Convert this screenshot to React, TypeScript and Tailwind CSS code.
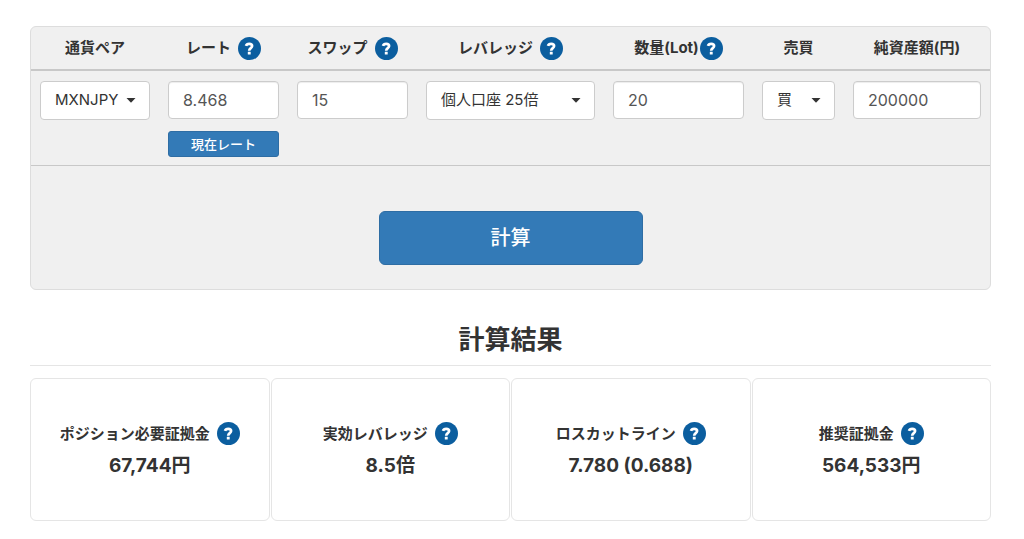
import React, { useState } from "react";

const fontStack = "font-['Inter','Noto_Sans_CJK_JP',sans-serif]";

const Help = ({ topic }: { topic: string }) => (
  <button type="button" aria-label={`${topic}の説明`} className="shrink-0">
    <svg viewBox="0 0 23 23" className="block h-[23px] w-[23px]" aria-hidden="true">
      <circle cx="11.5" cy="11.5" r="11.5" fill="#0b5e9f" />
      <path
        d="M8 8.9C8.4 7.5 9.6 6.9 11.2 6.9c1.8 0 2.9.8 2.9 2.2 0 2-2.9 2.1-2.9 4.6"
        fill="none"
        stroke="#fff"
        strokeWidth="2.7"
      />
      <rect x="9.8" y="14.8" width="2.9" height="2.8" rx=".3" fill="#fff" />
    </svg>
  </button>
);

type SelectProps = {
  id: string;
  options: string[];
};

const Select = ({ id, options }: SelectProps) => (
  <div className="relative">
    <select
      id={id}
      className="block h-[39px] w-full appearance-none rounded border border-[#ccc] bg-white pl-[14px] pr-6 text-[15px] text-[#333]"
    >
      {options.map((option) => (
        <option key={option}>{option}</option>
      ))}
    </select>
    <svg
      viewBox="0 0 10 5"
      className="pointer-events-none absolute right-[14px] top-[17px] h-[5px] w-[10px]"
      aria-hidden="true"
    >
      <path d="M0.5 0h9L5 4.7z" fill="#333" />
    </svg>
  </div>
);

const inputClass =
  "block h-[38px] w-full rounded border border-[#ccc] bg-white px-[14px] text-base text-[#555] shadow-[inset_0_1px_1px_rgba(0,0,0,0.075)]";

const columns = [
  { id: "pair", label: "通貨ペア", help: false, space: "", width: "w-[128px]" },
  { id: "rate", label: "レート", help: true, space: "gap-[7px]", width: "w-[129px]" },
  { id: "swap", label: "スワップ", help: true, space: "gap-[7px]", width: "w-[129px]" },
  { id: "leverage", label: "レバレッジ", help: true, space: "gap-[7px]", width: "w-[187px]" },
  { id: "lot", label: "数量(Lot)", help: true, space: "gap-px", width: "w-[149px]" },
  { id: "side", label: "売買", help: false, space: "", width: "w-[91px]" },
  { id: "equity", label: "純資産額(円)", help: false, space: "", width: "w-[146px]" },
];

const results = [
  { label: "ポジション必要証拠金", value: "67,744円" },
  { label: "実効レバレッジ", value: "8.5倍" },
  { label: "ロスカットライン", value: "7.780 (0.688)" },
  { label: "推奨証拠金", value: "564,533円" },
];

const App = () => {
  const [rate, setRate] = useState("8.468");
  const [swap, setSwap] = useState("15");
  const [lot, setLot] = useState("20");
  const [equity, setEquity] = useState("200000");

  return (
    <main className={`pb-[18px] pl-[30px] pr-[33px] pt-[26px] text-[#333] ${fontStack}`}>
      <form
        className="rounded-md border border-[#ddd] bg-[#f0f0f0]"
        onSubmit={(e) => e.preventDefault()}
      >
        <table className="w-full table-fixed border-collapse">
          <thead>
            <tr className="border-b-2 border-[#c8c8c8]">
              {columns.map((column) => (
                <th key={column.id} scope="col" className={`h-[43px] p-0 ${column.width}`}>
                  <div className={`flex items-center justify-center ${column.space}`}>
                    <label
                      htmlFor={column.id}
                      className="whitespace-nowrap text-[15px] font-bold leading-5"
                    >
                      {column.label}
                    </label>
                    {column.help && <Help topic={column.label} />}
                  </div>
                </th>
              ))}
            </tr>
          </thead>
          <tbody>
            <tr className="border-b border-[#c8c8c8] align-top">
              <td className="px-[9px] pb-2 pt-[10px]">
                <Select id="pair" options={["MXNJPY", "USDJPY", "ZARJPY", "TRYJPY"]} />
              </td>
              <td className="px-[9px] pb-2 pt-[10px]">
                <input
                  id="rate"
                  type="text"
                  value={rate}
                  onChange={(e) => setRate(e.target.value)}
                  className={inputClass}
                />
                <button
                  type="button"
                  onClick={() => setRate("8.468")}
                  className="mt-3 block h-[26px] w-full rounded-[3px] border border-[#2e6da4] bg-[#337ab7] text-[13px] font-medium leading-6 text-white"
                >
                  現在レート
                </button>
              </td>
              <td className="px-[9px] pb-2 pt-[10px]">
                <input
                  id="swap"
                  type="text"
                  value={swap}
                  onChange={(e) => setSwap(e.target.value)}
                  className={inputClass}
                />
              </td>
              <td className="px-[9px] pb-2 pt-[10px]">
                <Select id="leverage" options={["個人口座 25倍", "法人口座 100倍"]} />
              </td>
              <td className="px-[9px] pb-2 pt-[10px]">
                <input
                  id="lot"
                  type="text"
                  value={lot}
                  onChange={(e) => setLot(e.target.value)}
                  className={inputClass}
                />
              </td>
              <td className="px-[9px] pb-2 pt-[10px]">
                <Select id="side" options={["買", "売"]} />
              </td>
              <td className="px-[9px] pb-2 pt-[10px]">
                <input
                  id="equity"
                  type="text"
                  value={equity}
                  onChange={(e) => setEquity(e.target.value)}
                  className={inputClass}
                />
              </td>
            </tr>
          </tbody>
        </table>
        <div className="flex justify-center pb-6 pt-[45px]">
          <button
            type="submit"
            className="h-[54px] w-[264px] rounded-md border border-[#2e6da4] bg-[#337ab7] text-xl font-medium text-white"
          >
            計算
          </button>
        </div>
      </form>

      <section>
        <h2 className="mt-[33px] border-b border-[#e5e5e5] pb-2 text-center text-[26px] font-bold leading-[34px]">
          計算結果
        </h2>
        <div className="mt-3 grid grid-cols-4 gap-px">
          {results.map((result) => (
            <div
              key={result.label}
              className="flex flex-col items-center rounded-md border border-[#e5e5e5] pb-[42px] pt-[43px]"
            >
              <div className="flex items-center gap-[7px]">
                <span className="text-[15px] font-bold leading-5">{result.label}</span>
                <Help topic={result.label} />
              </div>
              <p className="mt-[9px] text-[19px] font-bold leading-6">{result.value}</p>
            </div>
          ))}
        </div>
      </section>
    </main>
  );
};

export default App;
